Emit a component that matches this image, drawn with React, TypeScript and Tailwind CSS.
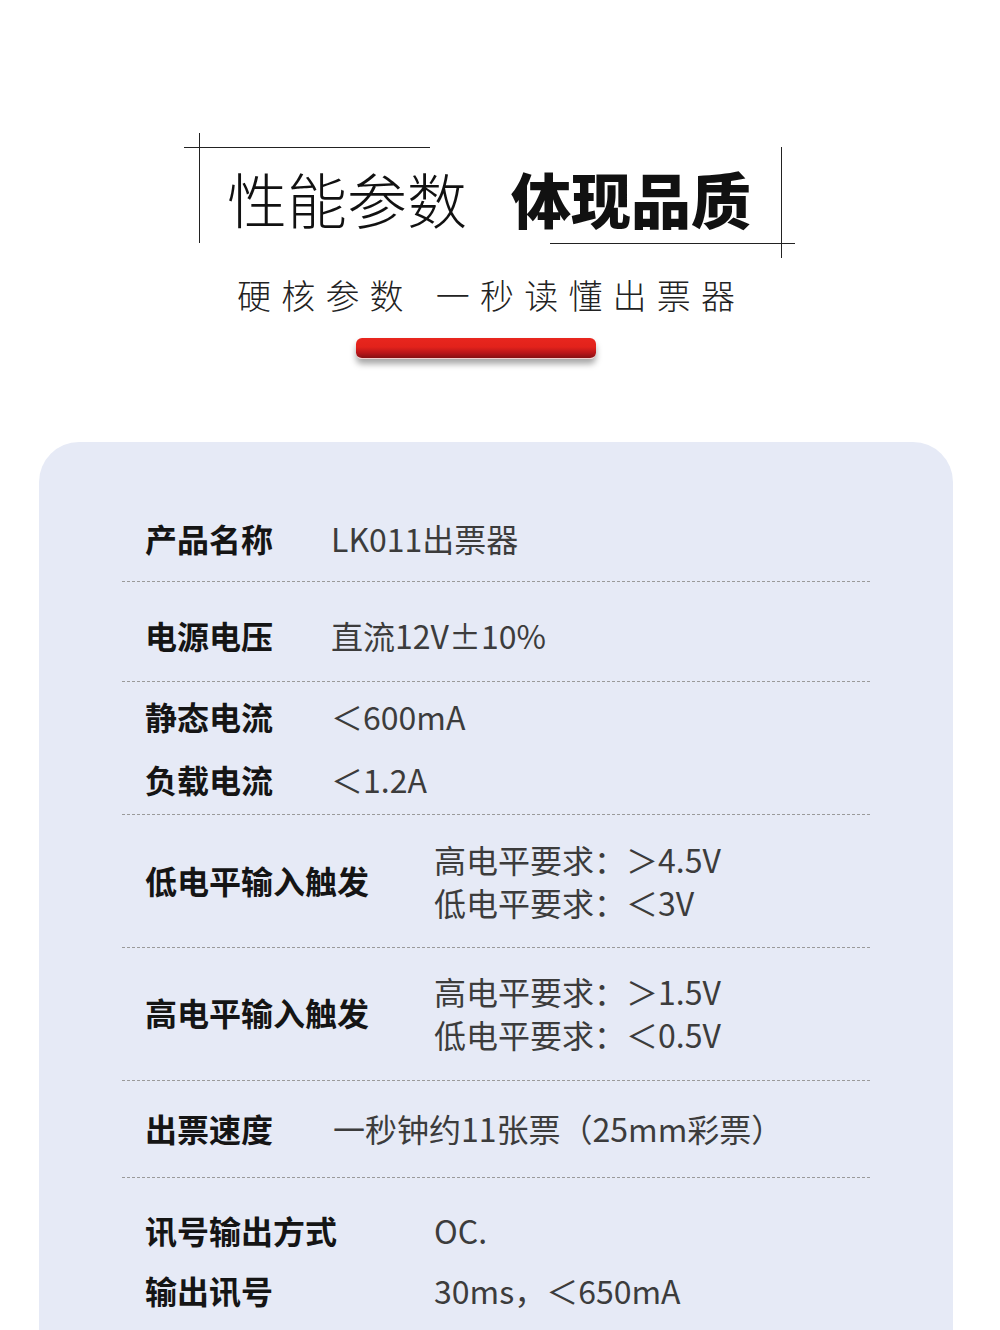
import React from "react";

const CJK = { fontFamily: '"Noto Sans CJK SC", "Noto Sans", sans-serif' };

function Divider() {
  return <div className="mx-[83px] border-t border-dashed border-[#9a9a9a]" />;
}

function Label({ children }: { children: React.ReactNode }) {
  return <div className="text-[32px] font-bold text-[#151515] leading-none whitespace-nowrap">{children}</div>;
}
function Value({ children }: { children: React.ReactNode }) {
  return <div className="text-[32px] text-[#3c3c3c] leading-none whitespace-nowrap">{children}</div>;
}

export default function App() {
  return (
    <div className="w-[1000px] h-[1330px] overflow-hidden bg-white flex flex-col" style={CJK}>
      {/* Header */}
      <div className="relative h-[442px] shrink-0">
        {/* decorative crop lines */}
        <div className="absolute left-[184px] top-[147px] w-[246px] h-px bg-[#222]" />
        <div className="absolute left-[199px] top-[133px] w-px h-[110px] bg-[#222]" />
        <div className="absolute left-[550px] top-[243px] w-[245px] h-px bg-[#222]" />
        <div className="absolute left-[781px] top-[147px] w-px h-[111px] bg-[#222]" />

        <div className="flex flex-col items-start pl-[227px] pt-[164px]">
          <div className="flex items-center h-[68px] text-[60px] leading-none text-[#111]">
            <span className="font-light">性能参数</span>
            <span className="font-black ml-[44px]">体现品质</span>
          </div>
          <div className="mt-[46px] ml-[10px] flex items-center text-[34px] leading-none font-light text-[#222] tracking-[10.2px]">
            <span>硬核参数</span>
            <span className="ml-[22px]">一秒读懂出票器</span>
          </div>
          <div className="mt-[26px] ml-[129px] w-[240px] h-[21px] rounded-[6px] border-b border-[#f3d0d0] bg-[linear-gradient(to_bottom,#e8261e_0%,#e2221b_45%,#b8161a_75%,#861013_100%)] shadow-[0_5px_6px_rgba(0,0,0,0.35)]" />
        </div>
      </div>

      {/* Card */}
      <div className="ml-[39px] w-[914px] flex-1 rounded-t-[40px] bg-[#e6eaf6] pt-[55px]">
        <div className="h-[84px] pb-[3px] flex items-center pl-[106px]">
          <div className="w-[186px]"><Label>产品名称</Label></div>
          <Value>LK011出票器</Value>
        </div>
        <Divider />
        <div className="h-[99px] pt-[6px] flex items-center pl-[106px]">
          <div className="w-[186px]"><Label>电源电压</Label></div>
          <Value>直流12V±10%</Value>
        </div>
        <Divider />
        <div className="h-[132px] pt-[2px] flex flex-col pl-[106px]">
          <div className="h-[63px] flex items-center">
            <div className="w-[186px]"><Label>静态电流</Label></div>
            <Value>＜600mA</Value>
          </div>
          <div className="h-[63px] flex items-center">
            <div className="w-[186px]"><Label>负载电流</Label></div>
            <Value>＜1.2A</Value>
          </div>
        </div>
        <Divider />
        <div className="h-[132px] pb-[2px] flex items-center pl-[106px]">
          <div className="w-[289px]"><Label>低电平输入触发</Label></div>
          <div className="flex flex-col">
            <div className="h-[43px] flex items-center"><Value>高电平要求：＞4.5V</Value></div>
            <div className="h-[43px] flex items-center"><Value>低电平要求：＜3V</Value></div>
          </div>
        </div>
        <Divider />
        <div className="h-[132px] pb-[4px] flex items-center pl-[106px]">
          <div className="w-[289px]"><Label>高电平输入触发</Label></div>
          <div className="flex flex-col">
            <div className="h-[43px] flex items-center"><Value>高电平要求：＞1.5V</Value></div>
            <div className="h-[43px] flex items-center"><Value>低电平要求：＜0.5V</Value></div>
          </div>
        </div>
        <Divider />
        <div className="h-[96px] pb-[2px] flex items-center pl-[106px]">
          <div className="w-[188px]"><Label>出票速度</Label></div>
          <Value>一秒钟约11张票（25mm彩票）</Value>
        </div>
        <Divider />
        <div className="pt-[22px] flex flex-col pl-[106px]">
          <div className="h-[60px] flex items-center">
            <div className="w-[289px]"><Label>讯号输出方式</Label></div>
            <Value>OC.</Value>
          </div>
          <div className="h-[60px] flex items-center">
            <div className="w-[289px]"><Label>输出讯号</Label></div>
            <Value>30ms，＜650mA</Value>
          </div>
        </div>
      </div>
    </div>
  );
}
